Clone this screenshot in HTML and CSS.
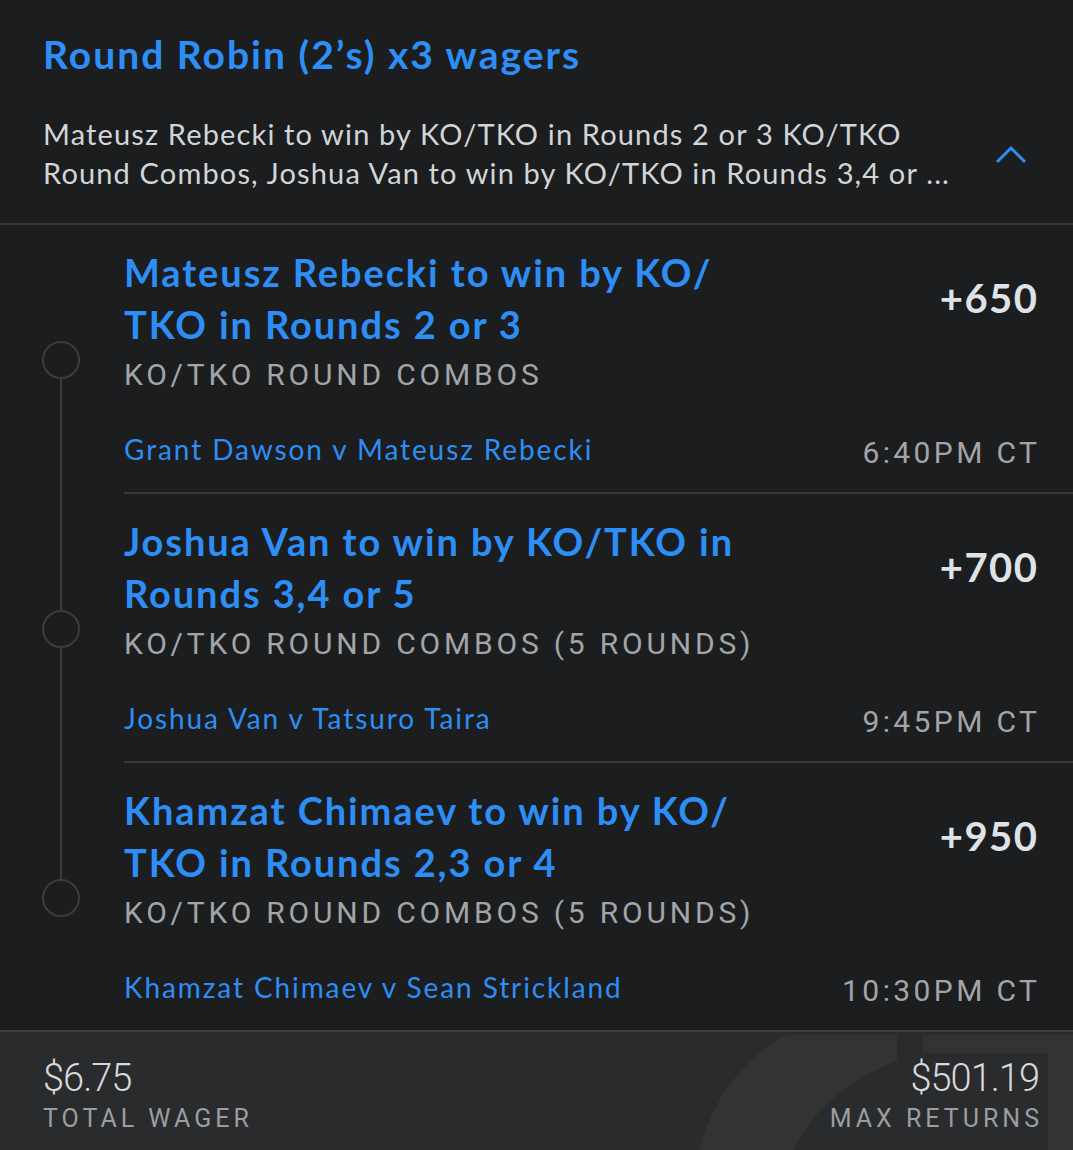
FILE: index.html
```html
<!DOCTYPE html>
<html lang="en">
<head>
  <meta charset="UTF-8">
  <title>Round Robin</title>
  <link rel="stylesheet" href="styles.css">
</head>
<body>
<div class="slip">
  <div class="head">
    <h1 class="head-title">Round Robin (2’s) x3 wagers</h1>
    <div class="head-row">
      <div class="head-desc">
        <div>Mateusz Rebecki to win by KO/TKO in Rounds 2 or 3 KO/TKO</div>
        <div>Round Combos, Joshua Van to win by KO/TKO in Rounds 3,4 or ...</div>
      </div>
      <svg class="chevron" width="32" height="20" viewBox="0 0 32 20">
        <path d="M2 17 L16 3 L30 17" fill="none" stroke="#2d8ef5" stroke-width="3"/>
      </svg>
    </div>
  </div>

  <div class="legs">
    <div class="leg first">
      <div class="rail"><span class="seg top"></span><span class="dot"></span><span class="seg bottom"></span></div>
      <div class="leg-body">
        <div class="leg-top">
          <div class="leg-title">Mateusz Rebecki to win by KO/<br>TKO in Rounds 2 or 3</div>
          <div class="odds">+650</div>
        </div>
        <div class="market">KO/TKO ROUND COMBOS</div>
        <div class="leg-foot">
          <span class="match">Grant Dawson v Mateusz Rebecki</span>
          <span class="time">6:40PM CT</span>
        </div>
      </div>
    </div>

    <div class="leg">
      <div class="rail"><span class="seg top"></span><span class="dot"></span><span class="seg bottom"></span></div>
      <div class="leg-body">
        <div class="leg-top">
          <div class="leg-title">Joshua Van to win by KO/TKO in<br>Rounds 3,4 or 5</div>
          <div class="odds">+700</div>
        </div>
        <div class="market">KO/TKO ROUND COMBOS (5 ROUNDS)</div>
        <div class="leg-foot">
          <span class="match">Joshua Van v Tatsuro Taira</span>
          <span class="time">9:45PM CT</span>
        </div>
      </div>
    </div>

    <div class="leg last">
      <div class="rail"><span class="seg top"></span><span class="dot"></span><span class="seg bottom"></span></div>
      <div class="leg-body">
        <div class="leg-top">
          <div class="leg-title">Khamzat Chimaev to win by KO/<br>TKO in Rounds 2,3 or 4</div>
          <div class="odds">+950</div>
        </div>
        <div class="market">KO/TKO ROUND COMBOS (5 ROUNDS)</div>
        <div class="leg-foot">
          <span class="match">Khamzat Chimaev v Sean Strickland</span>
          <span class="time">10:30PM CT</span>
        </div>
      </div>
    </div>
  </div>

  <div class="totals">
    <svg class="mark" width="1073" height="140" viewBox="0 0 1073 140">
      <path d="M695 140 C703 80 738 28 787 3 L1073 3 L1073 140 Z" fill="#323335"/>
      <path d="M897 0 L923 0 L923 21 L1048 21 L1048 140 L785 140 C798 90 845 48 897 29 Z" fill="#2a2b2d"/>
    </svg>
    <div class="total">
      <div class="amount">$6.75</div>
      <div class="label">TOTAL WAGER</div>
    </div>
    <div class="total right">
      <div class="amount">$501.19</div>
      <div class="label">MAX RETURNS</div>
    </div>
  </div>
</div>
</body>
</html>
```

FILE: styles.css
```css
*{
  margin: 0;
  padding: 0;
  box-sizing: border-box;
}
body{
  background: #1c1d1e;
  font-family: "Lato", "Noto Sans", sans-serif;
  color: #d2d5d8;
  overflow: hidden;
}
.slip{
  width: 1073px;
  height: 1150px;
  display: flex;
  flex-direction: column;
}

/* header */
.head{
  padding: 30px 36px 31px 43px;
  border-bottom: 2px solid #38393b;
}
.head-title{
  font-size: 39px;
  line-height: 48px;
  font-weight: 700;
  letter-spacing: 2px;
  color: #2d8ef5;
}
.head-row{
  margin-top: 36px;
  display: flex;
  align-items: center;
  justify-content: space-between;
}
.head-desc{
  font-size: 29px;
  line-height: 39px;
  letter-spacing: 1.15px;
  color: #d2d5d8;
  white-space: nowrap;
}
.chevron{
  margin-right: 10px;
  margin-top: 4px;
}

/* legs */
.legs{
  flex: 0 0 auto;
}
.leg{
  display: flex;
}
.rail{
  width: 124px;
  display: flex;
  flex-direction: column;
  align-items: center;
  padding-right: 2px;
}
.seg{
  width: 2px;
  background: #3b3c3e;
}
.seg.top{
  height: 116px;
}
.seg.bottom{
  flex: 1;
}
.first .seg.top,
.last .seg.bottom{
  background: transparent;
}
.dot{
  width: 38px;
  height: 38px;
  border: 2px solid #3b3c3e;
  border-radius: 50%;
}
.leg-body{
  flex: 1;
  padding: 21px 36px 22px 0;
  border-bottom: 2px solid #38393b;
}
.last .leg-body{
  border-bottom: none;
  padding-bottom: 22px;
}
.leg-top{
  display: flex;
  justify-content: space-between;
  align-items: center;
}
.leg-title{
  font-size: 38px;
  line-height: 52px;
  font-weight: 700;
  letter-spacing: 1.9px;
  color: #2d8ef5;
  white-space: nowrap;
}
.odds{
  font-size: 40px;
  font-weight: 700;
  letter-spacing: 1.5px;
  margin-right: -1.5px;
  color: #dfe2e6;
}
.market{
  font-family: "Roboto", sans-serif;
  font-size: 30px;
  line-height: 48px;
  letter-spacing: 3.8px;
  color: #a2a5a8;
  margin-top: 1px;
}
.leg-foot{
  margin-top: 30px;
  display: flex;
  justify-content: space-between;
  align-items: baseline;
  line-height: 40px;
}
.match{
  font-size: 28px;
  letter-spacing: 1.9px;
  color: #2d8ef5;
}
.time{
  font-family: "Roboto", sans-serif;
  font-size: 30px;
  letter-spacing: 3.4px;
  margin-right: -3.4px;
  color: #a2a5a8;
  position: relative;
  top: 3px;
}

/* totals */
.totals{
  flex: 1;
  position: relative;
  background: #2a2b2d;
  border-top: 2px solid #3e3f41;
  padding: 25px 34px 0 43px;
  display: flex;
  justify-content: space-between;
  overflow: hidden;
}
.mark{
  position: absolute;
  left: 0;
  top: 0;
}
.total{
  position: relative;
}
.total.right{
  text-align: right;
}
.amount{
  font-family: "Roboto", sans-serif;
  font-weight: 300;
  font-size: 38px;
  line-height: 42px;
  letter-spacing: -1px;
  color: #d6d9dc;
}
.label{
  font-family: "Roboto", sans-serif;
  font-size: 25px;
  line-height: 40px;
  letter-spacing: 4px;
  margin-right: -4px;
  color: #9a9da1;
}
```
